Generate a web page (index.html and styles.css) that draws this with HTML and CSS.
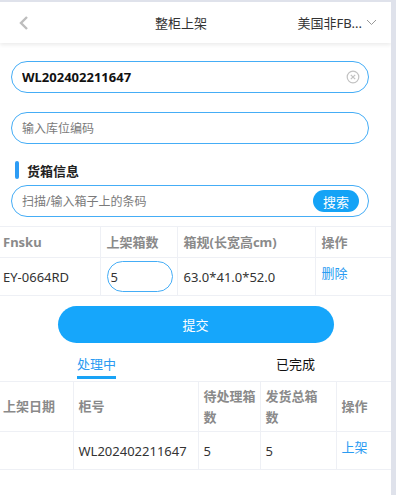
FILE: index.html
```html
<!DOCTYPE html>
<html lang="zh-CN">
<head>
    <meta charset="UTF-8">
    <meta name="viewport" content="width=device-width, initial-scale=1.0">
    <title>整柜上架</title>
    <link rel="stylesheet" href="styles.css">
</head>
<body>
    <div class="page">
        <!-- Top bar -->
        <div class="topbar">
            <div class="back">
                <svg width="12" height="16" viewBox="0 0 12 16"><polyline points="9,2 3,8 9,14" fill="none" stroke="#bdbdbd" stroke-width="2.4"/></svg>
            </div>
            <div class="title">整柜上架</div>
            <div class="picker">美国非FB...
                <svg width="11" height="7" viewBox="0 0 11 7"><polyline points="1,1 5.5,5.5 10,1" fill="none" stroke="#999" stroke-width="1"/></svg>
            </div>
        </div>

        <div class="content">
            <div class="field">
                <input class="field-input bold" type="text" value="WL202402211647">
                <span class="clear">
                    <svg width="14" height="14" viewBox="0 0 14 14"><circle cx="7" cy="7" r="5.8" fill="none" stroke="#c2c2c2" stroke-width="1.2"/><path d="M4.8 4.8 L9.2 9.2 M9.2 4.8 L4.8 9.2" stroke="#c2c2c2" stroke-width="1.2"/></svg>
                </span>
            </div>
            <div class="field">
                <input class="field-input" type="text" placeholder="输入库位编码">
            </div>

            <div class="section-title">货箱信息</div>
            <div class="field search">
                <input class="field-input" type="text" placeholder="扫描/输入箱子上的条码">
                <button class="search-btn">搜索</button>
            </div>
        </div>

        <table class="grid boxes">
            <colgroup><col style="width:100px"><col style="width:77px"><col style="width:138px"><col></colgroup>
            <tr class="head"><th>Fnsku</th><th>上架箱数</th><th>箱规(长宽高cm)</th><th>操作</th></tr>
            <tr>
                <td>EY-0664RD</td>
                <td><input class="qty" type="text" value="5"></td>
                <td>63.0*41.0*52.0</td>
                <td class="top"><a class="link">删除</a></td>
            </tr>
        </table>

        <div class="submit-wrap"><button class="submit">提交</button></div>

        <div class="tabs">
            <div class="tab active">处理中</div>
            <div class="tab">已完成</div>
        </div>

        <table class="grid list">
            <colgroup><col style="width:73px"><col style="width:125px"><col style="width:62px"><col style="width:76px"><col></colgroup>
            <tr class="head"><th>上架日期</th><th>柜号</th><th>待处理箱数</th><th class="narrow">发货总箱数</th><th>操作</th></tr>
            <tr>
                <td></td>
                <td>WL202402211647</td>
                <td>5</td>
                <td>5</td>
                <td class="top"><a class="link">上架</a></td>
            </tr>
        </table>
    </div>
</body>
</html>
```

FILE: styles.css
```css
body { margin: 0; background: #dfe2eb; font-family: "Noto Sans", "Noto Sans CJK SC", sans-serif; font-size: 13px; color: #333; }
.page { width: 391px; margin-top: 2px; background: #fff; height: 493px; overflow: hidden; }

.topbar { display: flex; align-items: center; height: 41px; box-shadow: 0 2px 4px rgba(0,0,0,0.08); position: relative; }
.back { width: 137px; padding-left: 18px; display: flex; align-items: center; }
.title { font-size: 13px; color: #333; }
.picker { margin-left: auto; display: flex; align-items: center; gap: 4px; padding-right: 14px; font-size: 13px; color: #333; }

.content { padding: 18px 22px 0 11px; }
.field { position: relative; margin-bottom: 19px; }
.field-input { width: 100%; box-sizing: border-box; height: 32px; border: 1px solid #45adf6; border-radius: 16px; padding: 0 30px 0 10px; font-family: inherit; font-size: 12px; color: #111; outline: none; }
.field-input.bold { font-size: 13px; font-weight: 700; }
.field-input::placeholder { color: #7a7a7a; }
.clear { position: absolute; right: 9px; top: 9px; display: flex; }

.section-title { display: flex; align-items: center; gap: 8px; font-size: 13px; font-weight: 700; color: #222; margin: -2px 0 6px 4px; height: 18px; }
.section-title::before { content: ""; width: 4px; height: 18px; border-radius: 2px; background: #2d9cf5; }

.search { margin-bottom: 9px; }
.search-btn { position: absolute; right: 10px; top: 5px; width: 46px; height: 22px; border: none; border-radius: 11px; background: #14a3f6; color: #fff; font-family: inherit; font-size: 13px; padding: 0; }

.grid { width: 391px; border-collapse: collapse; table-layout: fixed; }
.grid th, .grid td { border: 1px solid #eef0f5; padding: 0 4px 0 6px; text-align: left; vertical-align: middle; line-height: 20px; }
.grid tr > :first-child { border-left: none; padding-left: 3px; }
.grid tr > :last-child { border-right: none; }
.grid th { color: #8a8a8a; font-weight: 700; font-size: 13px; line-height: 21px; }
.grid td.top { vertical-align: top; padding-top: 5px; }
.link { color: #2a9bf2; }

.boxes .head th { height: 30px; }
.boxes td { height: 38px; box-sizing: border-box; }
.qty { width: 66px; height: 31px; box-sizing: border-box; border: 1px solid #45adf6; border-radius: 16px; padding: 0 3px; font-family: inherit; font-size: 13px; color: #333; outline: none; display: block; }

.submit-wrap { display: flex; justify-content: center; padding: 10px 0 11px; }
.submit { width: 276px; height: 37px; border: none; border-radius: 19px; background: #16a6fb; color: #fff; font-family: inherit; font-size: 13px; }

.tabs { display: flex; padding: 0 0 2px 77px; }
.tab { font-size: 13px; color: #111; height: 25px; line-height: 20px; position: relative; white-space: nowrap; }
.tab + .tab { margin-left: 160px; }
.tab.active { color: #2a9bf2; }
.tab.active::after { content: ""; position: absolute; left: 0; right: 0; bottom: 0; height: 3px; background: #1aa3f6; }

.list th, .list td { padding-left: 5px; padding-right: 3px; }
.list th.narrow { padding-right: 12px; }
.list .head th { height: 50px; box-sizing: border-box; }
.list td { height: 38px; box-sizing: border-box; }
```
